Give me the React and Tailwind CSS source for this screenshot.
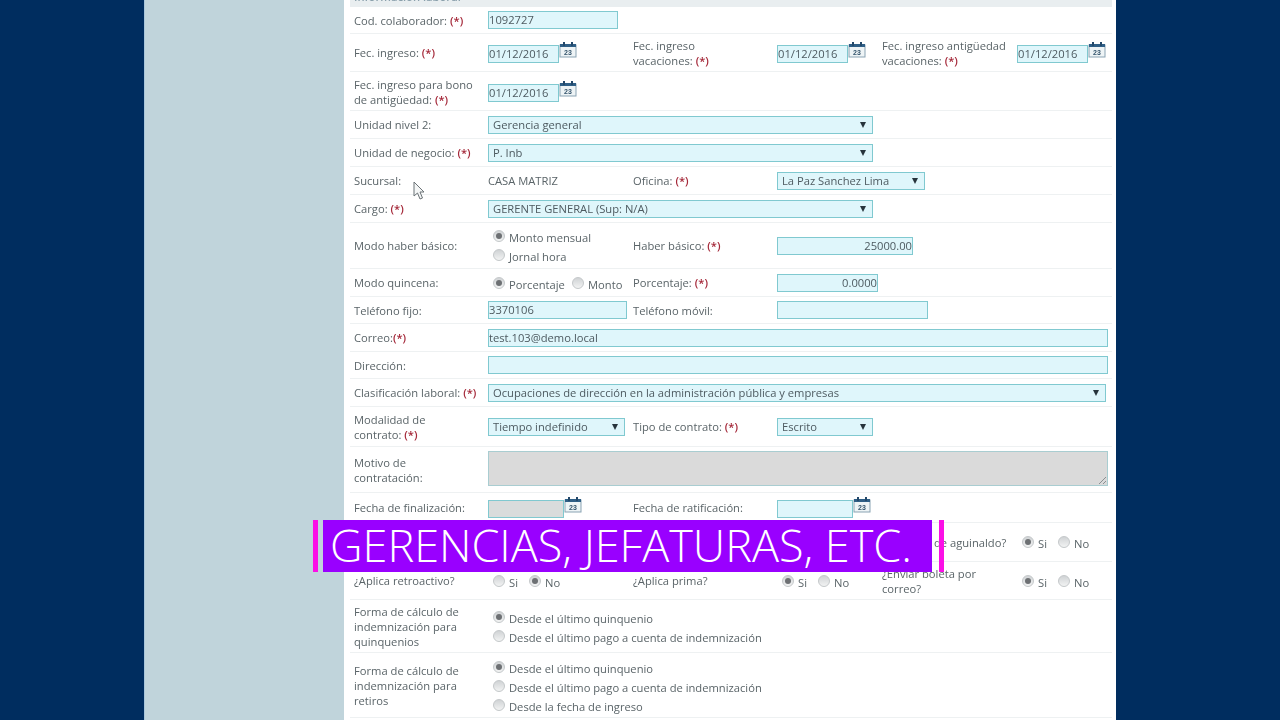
import React from 'react';

const Req = () => <span className="font-semibold text-[#a5293a]">(*)</span>;

const CalendarIcon = () => (
  <svg width="18" height="17" viewBox="0 0 18 17" className="shrink-0 -mt-[4px]">
    <rect x="1" y="4" width="16" height="12" fill="#eef4f6" stroke="#8aa3b3" />
    <rect x="1" y="3" width="16" height="3" fill="#2f5f86" />
    <rect x="4" y="1" width="2" height="4" fill="#23486a" />
    <rect x="12" y="1" width="2" height="4" fill="#23486a" />
    <text x="9" y="14" textAnchor="middle" fontSize="7" fontWeight="700" fill="#33536b" fontFamily="Liberation Sans, sans-serif">23</text>
  </svg>
);

const Row = ({ h, children }) => (
  <div className={`grid grid-cols-[134px_145px_144px_105px_135px_1fr] items-center border-b border-[#eef1f2] pl-1 ${h}`}>
    {children}
  </div>
);

const Label = ({ children, className = '' }) => <div className={`leading-[15px] text-[#5a6468] ${className}`}>{children}</div>;

const Input = ({ className, children }) => (
  <div className={`flex h-[18px] items-center border border-[#80c9d0] bg-[#dff6fb] pt-px text-[#4d5a60] ${className}`}>
    {children}
  </div>
);

const Select = ({ className, children }) => (
  <div className={`flex h-[18px] items-center justify-between border border-[#80c9d0] bg-[#dff6fb] pl-[4px] pr-[6px] pt-px text-[#4d5a60] ${className}`}>
    <span>{children}</span>
    <svg width="6" height="6" viewBox="0 0 6 6" className="-mt-px"><path d="M0 0h6L3 6z" fill="#27343c" /></svg>
  </div>
);

const DateField = ({ value, className = 'bg-[#dff6fb]', width = 'w-[71px]' }) => (
  <div className="mt-[2px] flex items-start">
    <div className={`flex h-[18px] items-center border border-[#80c9d0] pt-px text-[#4d5a60] ${className} ${width}`}>{value}</div>
    <CalendarIcon />
  </div>
);

const Radio = ({ checked, children, className = '' }) => (
  <div className={`flex items-start ${className}`}>
    <span className="flex h-3 w-3 shrink-0 items-center justify-center rounded-full border border-[#c4c8ca] bg-gradient-to-b from-[#d0d3d5] to-[#f2f3f3]">
      {checked && <span className="h-[6px] w-[6px] rounded-full bg-[#6d7073]" />}
    </span>
    <span className="ml-1 leading-[15px] text-[#5a6468]">{children}</span>
  </div>
);

const SiNo = ({ si }) => (
  <div className="flex pl-[5px] pt-[3px]">
    <Radio checked={si} className="w-[36px]">Si</Radio>
    <Radio checked={!si}>No</Radio>
  </div>
);

export default function App() {
  return (
    <div className="relative flex h-[720px] w-[1280px] overflow-hidden bg-[#002d5f] font-['Open_Sans',sans-serif] text-[11.2px]">
      <div className="ml-[144px] w-[200px] border-l border-[#a9c6da] bg-[#c0d4db]" />

      <main className="w-[772px] bg-white pl-[6px] pr-[4px] blur-[0.4px]">
        <div className="h-[7px] overflow-hidden bg-[#e9eef0] pl-1">
          <div className="-mt-[11px] font-semibold leading-[15px] text-[#8aa0ac]">Información laboral</div>
        </div>

        <Row h="h-[27px]">
          <Label>Cod. colaborador: <Req /></Label>
          <Input className="w-[130px]">1092727</Input>
        </Row>

        <Row h="h-[38px]">
          <Label>Fec. ingreso: <Req /></Label>
          <DateField value="01/12/2016" />
          <Label>Fec. ingreso<br />vacaciones: <Req /></Label>
          <DateField value="01/12/2016" />
          <Label>Fec. ingreso antigüedad<br />vacaciones: <Req /></Label>
          <DateField value="01/12/2016" />
        </Row>

        <Row h="h-[39px]">
          <Label className="pt-px">Fec. ingreso para bono<br />de antigüedad: <Req /></Label>
          <div className="pt-px"><DateField value="01/12/2016" /></div>
        </Row>

        <Row h="h-[28px]">
          <Label>Unidad nivel 2:</Label>
          <div className="col-span-3"><Select className="w-[385px]">Gerencia general</Select></div>
        </Row>

        <Row h="h-[28px]">
          <Label>Unidad de negocio: <Req /></Label>
          <div className="col-span-3"><Select className="w-[385px]">P. Inb</Select></div>
        </Row>

        <Row h="h-[28px]">
          <Label>Sucursal:</Label>
          <Label>CASA MATRIZ</Label>
          <Label>Oficina: <Req /></Label>
          <div className="col-span-2"><Select className="w-[148px]">La Paz Sanchez Lima</Select></div>
        </Row>

        <Row h="h-[28px]">
          <Label>Cargo: <Req /></Label>
          <div className="col-span-3"><Select className="w-[385px]">GERENTE GENERAL (Sup: N/A)</Select></div>
        </Row>

        <Row h="h-[46px]">
          <Label>Modo haber básico:</Label>
          <div className="flex flex-col gap-[4px] pl-[5px] pt-[3px]">
            <Radio checked>Monto mensual</Radio>
            <Radio>Jornal hora</Radio>
          </div>
          <Label>Haber básico: <Req /></Label>
          <div className="col-span-2"><Input className="w-[136px] justify-end">25000.00</Input></div>
        </Row>

        <Row h="h-[28px]">
          <Label>Modo quincena:</Label>
          <div className="flex pl-[5px] pt-[3px]">
            <Radio checked className="w-[79px]">Porcentaje</Radio>
            <Radio>Monto</Radio>
          </div>
          <Label>Porcentaje: <Req /></Label>
          <div className="col-span-2"><Input className="w-[101px] justify-end">0.0000</Input></div>
        </Row>

        <Row h="h-[27px]">
          <Label>Teléfono fijo:</Label>
          <Input className="w-[139px]">3370106</Input>
          <Label>Teléfono móvil:</Label>
          <div className="col-span-2"><Input className="w-[151px]" /></div>
        </Row>

        <Row h="h-[28px]">
          <Label>Correo:<Req /></Label>
          <div className="col-span-5"><Input className="w-[620px]">test.103@demo.local</Input></div>
        </Row>

        <Row h="h-[27px]">
          <Label>Dirección:</Label>
          <div className="col-span-5"><Input className="w-[620px]" /></div>
        </Row>

        <Row h="h-[28px]">
          <Label>Clasificación laboral: <Req /></Label>
          <div className="col-span-5"><Select className="w-[618px]">Ocupaciones de dirección en la administración pública y empresas</Select></div>
        </Row>

        <Row h="h-[40px]">
          <Label>Modalidad de<br />contrato: <Req /></Label>
          <Select className="w-[137px]">Tiempo indefinido</Select>
          <Label>Tipo de contrato: <Req /></Label>
          <div className="col-span-2"><Select className="w-[96px]">Escrito</Select></div>
        </Row>

        <Row h="h-[46px]">
          <Label>Motivo de<br />contratación:</Label>
          <div className="relative col-span-5 h-[35px] w-[620px] -translate-y-px border border-[#a9cdd1] bg-[#dadada]">
            <svg width="9" height="9" viewBox="0 0 9 9" className="absolute bottom-0 right-0">
              <path d="M8 1 1 8M8 5 5 8" stroke="#8a8f92" fill="none" />
            </svg>
          </div>
        </Row>

        <Row h="h-[30px]">
          <Label>Fecha de finalización:</Label>
          <DateField value="" width="w-[76px]" className="bg-[#d9dcdc]" />
          <Label>Fecha de ratificación:</Label>
          <DateField value="" width="w-[76px]" />
        </Row>

        <Row h="h-[39px]">
          <div className="col-span-4" />
          <Label>¿Derecho de aguinaldo?</Label>
          <SiNo si />
        </Row>

        <Row h="h-[38px]">
          <Label>¿Aplica retroactivo?</Label>
          <SiNo si={false} />
          <Label>¿Aplica prima?</Label>
          <SiNo si />
          <Label>¿Enviar boleta por<br />correo?</Label>
          <SiNo si />
        </Row>

        <Row h="h-[53px]">
          <Label className="pt-px">Forma de cálculo de<br />indemnización para<br />quinquenios</Label>
          <div className="col-span-3 flex flex-col gap-[4px] pl-[5px] pt-[4px]">
            <Radio checked>Desde el último quinquenio</Radio>
            <Radio>Desde el último pago a cuenta de indemnización</Radio>
          </div>
        </Row>

        <Row h="h-[65px]">
          <Label className="pt-px">Forma de cálculo de<br />indemnización para<br />retiros</Label>
          <div className="col-span-3 flex flex-col gap-[4px] pl-[5px] pt-[4px]">
            <Radio checked>Desde el último quinquenio</Radio>
            <Radio>Desde el último pago a cuenta de indemnización</Radio>
            <Radio>Desde la fecha de ingreso</Radio>
          </div>
        </Row>
      </main>

      {/* mouse cursor */}
      <svg width="14" height="20" viewBox="0 0 14 20" className="absolute left-[412px] top-[181px]">
        <path d="M2 1v14l3.5-3 2.5 6 2.5-1-2.5-6H12z" fill="#f4f6f6" stroke="#6b7276" />
      </svg>

      {/* video caption */}
      <div className="absolute left-[313px] top-[520px] flex h-[52px] w-[631px]">
        <div className="w-[5px] bg-[#fb0fe6]" />
        <div className="ml-[5px] flex w-[609px] items-center bg-[#9900ff] pb-[3px] pl-[7px] text-[45px] font-light leading-none text-white">
          GERENCIAS, JEFATURAS, ETC.
        </div>
        <div className="ml-[7px] w-[5px] bg-[#fb0fe6]" />
      </div>
    </div>
  );
}
